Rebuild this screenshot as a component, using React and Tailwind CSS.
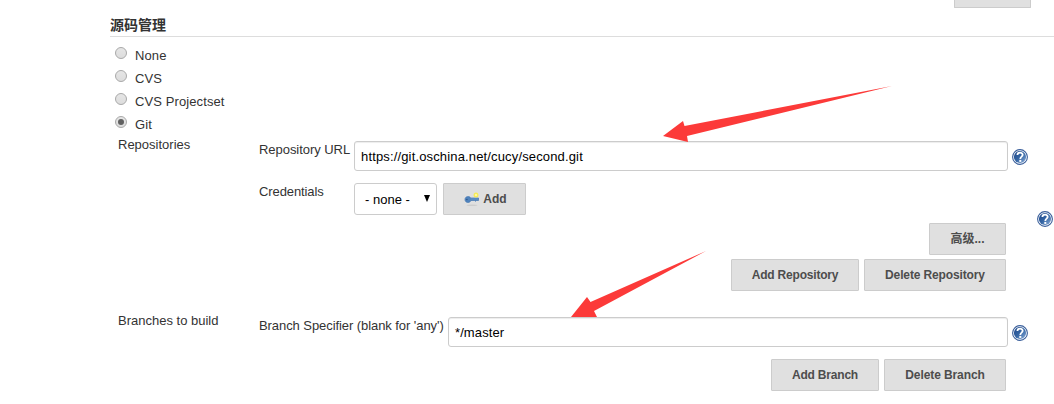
import React from "react";

function HelpIcon() {
  return (
    <svg width="16" height="16" viewBox="0 0 16 16" className="block shrink-0">
      <defs>
        <linearGradient id="help" x1="0" y1="0" x2="1" y2="1">
          <stop offset="0" stopColor="#1f4788" />
          <stop offset="0.5" stopColor="#3465a4" />
          <stop offset="1" stopColor="#8fb0da" />
        </linearGradient>
      </defs>
      <circle cx="8" cy="8" r="7.4" fill="#fff" stroke="#3a5f9b" strokeWidth="1.1" />
      <circle cx="8" cy="8" r="6.1" fill="url(#help)" />
      <path d="M5.4 6C5.4 2.9 10.7 2.9 10.7 5.8C10.7 7.6 8.3 7.7 8.3 9.9" fill="none" stroke="#fff" strokeWidth="1.8" />
      <rect x="7.3" y="10.9" width="2" height="2" fill="#fff" />
    </svg>
  );
}

function KeyIcon() {
  return (
    <svg width="16" height="16" viewBox="0 0 16 16" className="block shrink-0">
      <ellipse cx="8" cy="14.2" rx="5.5" ry="0.8" fill="#cdcdcd" />
      <path d="M1 8.5C1 5 5.6 4.8 6.6 7H14.5V9.5H12.5L11.5 10.3L10.5 9.5H7C5.5 12.6 1 12 1 8.5Z" fill="#4f83bd" stroke="#4577b2" strokeWidth="0.7" />
      <path d="M6.5 8H14" stroke="#6d9ccd" strokeWidth="0.8" />
      <circle cx="2.9" cy="8.5" r="0.7" fill="#284f83" />
      <circle cx="12" cy="4" r="2.5" fill="#f7ec58" />
      <circle cx="12" cy="4" r="1.1" fill="#fffbb5" />
    </svg>
  );
}

function Radio({ label, checked }) {
  return (
    <label className="flex h-[23px] items-start">
      <svg width="12" height="12" viewBox="0 0 12 12" className="mr-2 block">
        <defs>
          <linearGradient id="radio" x1="0" y1="0" x2="0" y2="1">
            <stop offset="0" stopColor="#e6e6e6" />
            <stop offset="1" stopColor="#dcdcdc" />
          </linearGradient>
        </defs>
        <circle cx="6" cy="6" r="5.5" fill="url(#radio)" stroke="#a9a9a9" />
        {checked && <circle cx="6" cy="6" r="3" fill="#606060" />}
      </svg>
      <span className="leading-[17px] tracking-[0.1px]">{label}</span>
    </label>
  );
}

function Button({ className, children }) {
  return (
    <button className={"flex h-8 shrink-0 items-center justify-center rounded-[1px] border border-[#ccc] bg-[#e0e0e0] text-[12px] font-bold text-[#4d4d4d] " + className}>
      {children}
    </button>
  );
}

function TextField({ value, className }) {
  return (
    <div className={"flex h-[30px] shrink-0 items-center rounded-[3px] border border-[#ccc] bg-white px-1.5 pt-0.5 text-black shadow-[inset_0_1px_1px_rgba(0,0,0,0.075)] " + className}>
      {value}
    </div>
  );
}

export default function App() {
  return (
    <div className="relative flex h-[404px] w-[1054px] flex-col overflow-hidden bg-white font-['Liberation_Sans','Noto_Sans_CJK_SC',sans-serif] text-[13px] leading-4 text-[#333]">
      <div className="ml-[954px] h-2 w-[77px] rounded-b-[1px] border border-t-0 border-[#ccc] bg-[#e0e0e0]" />
      <h2 className="ml-[110px] flex h-[29px] items-center border-b border-[#ddd] pt-[5px] text-[14px] font-bold leading-5">源码管理</h2>

      <div className="ml-[115px] mt-[10px] flex flex-col">
        <Radio label="None" />
        <Radio label="CVS" />
        <Radio label="CVS Projectset" />
        <Radio label="Git" checked />
      </div>

      <section className="-mt-[2px] flex h-[176px] pl-[118px]">
        <div className="w-[141px]">Repositories</div>
        <div className="flex w-[749px] flex-col pt-1">
          <div className="flex">
            <div className="w-[95px] whitespace-nowrap pt-px tracking-[-0.05px]">Repository URL</div>
            <TextField value="https://git.oschina.net/cucy/second.git" className="w-[654px] tracking-[0.15px]" />
          </div>
          <div className="mt-3 flex">
            <div className="w-[95px] pt-px tracking-[-0.1px]">Credentials</div>
            <div className="flex h-8 w-[83px] items-center justify-between rounded-[3px] border border-[#ccc] pl-2.5 pr-1.5 text-black">
              <span className="pt-0.5">- none -</span>
              <svg width="6" height="7" viewBox="0 0 6 7" className="-mt-px"><path d="M0 0H6L3 7Z" fill="#000" /></svg>
            </div>
            <Button className="ml-1.5 w-[83px] gap-[3px] pl-0.5"><KeyIcon />Add</Button>
          </div>
          <div className="mt-2 flex justify-end pr-[2px]"><Button className="w-[77px]">高级...</Button></div>
          <div className="mt-1 flex justify-end gap-[5px] pr-[2px]">
            <Button className="w-[128px] tracking-[-0.2px]">Add Repository</Button>
            <Button className="w-[142px] tracking-[-0.13px]">Delete Repository</Button>
          </div>
        </div>
        <div className="ml-1 w-[25px] pt-3"><HelpIcon /></div>
        <div className="pt-[74px]"><HelpIcon /></div>
      </section>

      <section className="flex pl-[118px]">
        <div className="w-[141px]">Branches to build</div>
        <div className="flex w-[749px] flex-col pt-1">
          <div className="flex">
            <div className="w-[189px] whitespace-nowrap pt-px tracking-[-0.07px]">Branch Specifier (blank for 'any')</div>
            <TextField value="*/master" className="w-[560px] tracking-[0.1px]" />
          </div>
          <div className="mt-3 flex justify-end gap-[5px] pr-[2px]">
            <Button className="w-[108px] tracking-[-0.2px]">Add Branch</Button>
            <Button className="w-[122px] tracking-[-0.1px]">Delete Branch</Button>
          </div>
        </div>
        <div className="ml-1 pt-3"><HelpIcon /></div>
      </section>

      <svg width="1054" height="404" viewBox="0 0 1054 404" className="pointer-events-none absolute left-0 top-0" fill="#fc3a39">
        <path d="M663 136L683 121L684.5 126L892 86L687 136L688 142Z" />
        <path d="M571 317L587 297L590.5 302L706 251L594 311L597 317Z" />
      </svg>
    </div>
  );
}
